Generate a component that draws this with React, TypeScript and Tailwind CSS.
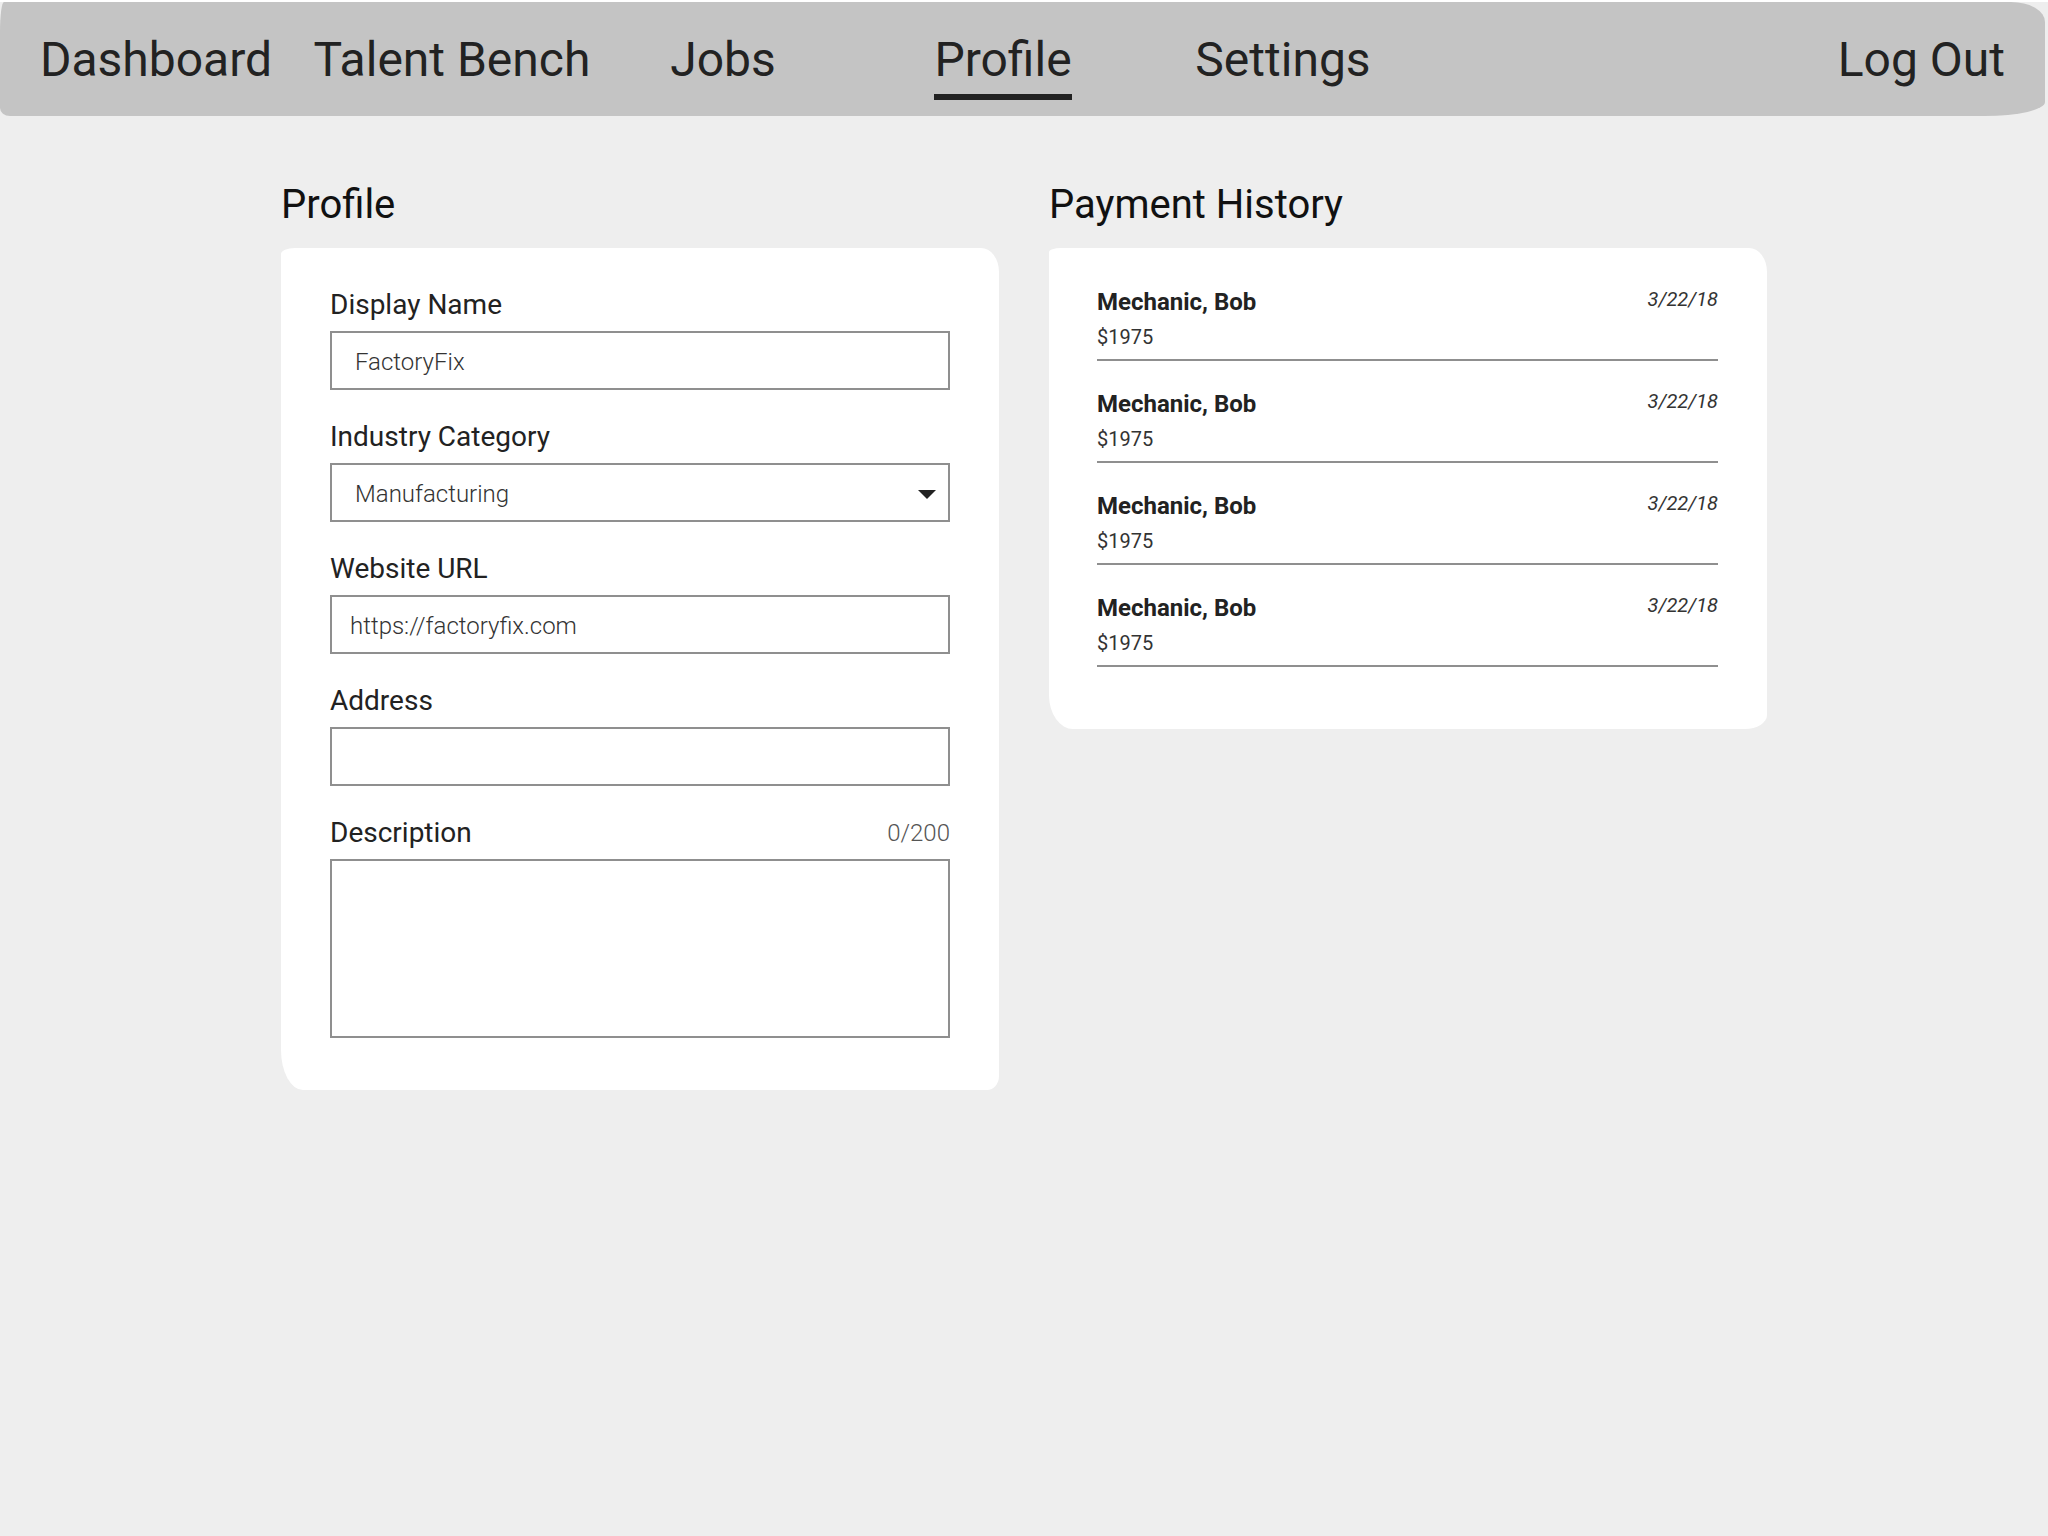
import { useState } from 'react'

const NAV = [
  { label: 'Dashboard', slot: 'w-[312px]' },
  { label: 'Talent Bench', slot: 'w-[280px]' },
  { label: 'Jobs', slot: 'w-[262px]' },
  { label: 'Profile', slot: 'w-[298px]', active: true },
  { label: 'Settings', slot: 'w-[262px]' },
]

const PAYMENTS = [
  { name: 'Mechanic, Bob', amount: '$1975', date: '3/22/18' },
  { name: 'Mechanic, Bob', amount: '$1975', date: '3/22/18' },
  { name: 'Mechanic, Bob', amount: '$1975', date: '3/22/18' },
  { name: 'Mechanic, Bob', amount: '$1975', date: '3/22/18' },
]

const inputCls =
  'w-full h-[59px] border-2 border-[#8f8f8f] bg-white px-[23px] pt-[2px] text-[24px] font-light text-[#333] outline-none'

function Field({ label, children, counter }: { label: string; children: React.ReactNode; counter?: string }) {
  return (
    <div className="flex flex-col">
      <div className="flex items-end justify-between mb-[10px]">
        <label className="text-[28px] leading-[32px] text-[#222]">{label}</label>
        {counter && <span className="text-[24px] leading-[32px] font-light text-[#555]">{counter}</span>}
      </div>
      {children}
    </div>
  )
}

export default function App() {
  const [desc, setDesc] = useState('')

  return (
    <div className="min-h-screen bg-[#eeeeee] font-['Roboto',_'Noto_Sans',_sans-serif] text-[#222]">
      <nav className="mt-[2px] h-[114px] w-[2045px] bg-[#c4c4c4] flex items-start pt-[30px] rounded-[4px_34px_60px_10px/30px_20px_14px_8px]">
        {NAV.map((n) => (
          <div key={n.label} className={`${n.slot} flex justify-center whitespace-nowrap`}>
            <span
              className={
                n.active
                  ? 'text-[48px] leading-[56px] text-[#222] pb-[6px] border-b-[6px] border-[#222]'
                  : 'text-[48px] leading-[56px] text-[#222]'
              }
            >
              {n.label}
            </span>
          </div>
        ))}
        <span className="ml-auto mr-[40px] whitespace-nowrap text-[48px] leading-[56px] text-[#222]">Log Out</span>
      </nav>

      <main className="mt-[66px] ml-[281px] flex gap-[50px] items-start">
        <section className="w-[718px]">
          <h2 className="text-[40px] leading-[46px] text-[#111] mb-[20px]">Profile</h2>
          <div className="bg-white pt-[41px] pb-[52px] pl-[49px] pr-[49px] flex flex-col gap-[31px] rounded-[14px_18px_12px_22px/6px_24px_14px_40px]">
            <Field label="Display Name">
              <input className={inputCls} defaultValue="FactoryFix" />
            </Field>
            <Field label="Industry Category">
              <div className="relative">
                <select className={`${inputCls} appearance-none`} defaultValue="Manufacturing">
                  <option>Manufacturing</option>
                  <option>Construction</option>
                  <option>Energy</option>
                </select>
                <span className="pointer-events-none absolute right-[14px] top-[27px] w-0 h-0 border-l-[9px] border-r-[9px] border-t-[9px] border-l-transparent border-r-transparent border-t-[#222]" />
              </div>
            </Field>
            <Field label="Website URL">
              <input className={`${inputCls} !px-[18px]`} defaultValue="https://factoryfix.com" />
            </Field>
            <Field label="Address">
              <input className={inputCls} defaultValue="" />
            </Field>
            <Field label="Description" counter={`${desc.length}/200`}>
              <textarea
                className="w-full h-[179px] border-2 border-[#8f8f8f] bg-white px-[23px] py-[14px] text-[24px] font-light text-[#333] outline-none resize-none"
                maxLength={200}
                value={desc}
                onChange={(e) => setDesc(e.target.value)}
              />
            </Field>
          </div>
        </section>

        <section className="w-[718px]">
          <h2 className="text-[40px] leading-[46px] text-[#111] mb-[20px]">Payment History</h2>
          <div className="bg-white pt-[11px] pb-[62px] pl-[48px] pr-[49px] rounded-[12px_18px_22px_24px/4px_24px_14px_34px]">
            {PAYMENTS.map((p, i) => (
              <div key={i} className="pt-[28px] pb-[10px] border-b-2 border-[#8f8f8f]">
                <div className="flex items-start justify-between">
                  <span className="text-[24px] leading-[30px] font-bold text-[#222]">{p.name}</span>
                  <span className="text-[20px] leading-[24px] italic text-[#333]">{p.date}</span>
                </div>
                <div className="mt-[8px] text-[20px] leading-[24px] text-[#333]">{p.amount}</div>
              </div>
            ))}
          </div>
        </section>
      </main>
    </div>
  )
}
